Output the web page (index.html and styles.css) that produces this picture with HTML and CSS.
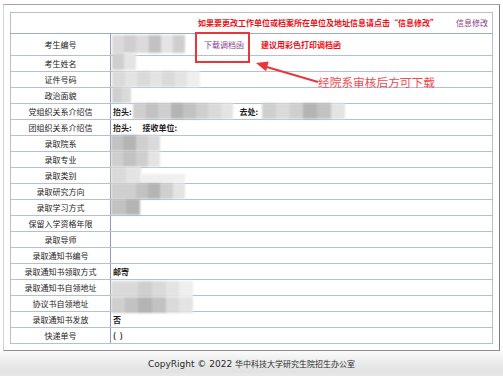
FILE: index.html
```html
<!DOCTYPE html>
<html lang="zh">
<head>
<meta charset="utf-8">
<title>录取信息</title>
<link rel="stylesheet" href="styles.css">
</head>
<body>
<div class="page">
  <div class="frame">
    <table class="info">
      <colgroup><col class="c-label"><col class="c-value"></colgroup>
      <tr class="head">
        <td colspan="2"><span class="warn">如果要更改工作单位或档案所在单位及地址信息请点击“信息修改”</span><a class="link">信息修改</a></td>
      </tr>
      <tr class="first">
        <th>考生编号</th>
        <td><a class="link dl">下载调档函</a><span class="warn">建议用彩色打印调档函</span></td>
      </tr>
      <tr><th>考生姓名</th><td></td></tr>
      <tr><th>证件号码</th><td></td></tr>
      <tr><th>政治面貌</th><td></td></tr>
      <tr><th>党组织关系介绍信</th><td><span class="k">抬头:</span><span class="k k-go">去处:</span></td></tr>
      <tr><th>团组织关系介绍信</th><td><span class="k">抬头:</span><span class="k k-recv">接收单位:</span></td></tr>
      <tr><th>录取院系</th><td></td></tr>
      <tr><th>录取专业</th><td></td></tr>
      <tr><th>录取类别</th><td></td></tr>
      <tr><th>录取研究方向</th><td></td></tr>
      <tr><th>录取学习方式</th><td></td></tr>
      <tr><th>保留入学资格年限</th><td></td></tr>
      <tr><th>录取导师</th><td></td></tr>
      <tr><th>录取通知书编号</th><td></td></tr>
      <tr><th>录取通知书领取方式</th><td><span class="k">邮寄</span></td></tr>
      <tr><th>录取通知书自领地址</th><td></td></tr>
      <tr><th>协议书自领地址</th><td></td></tr>
      <tr><th>录取通知书发放</th><td><span class="k">否</span></td></tr>
      <tr><th>快递单号</th><td><span class="k">(&nbsp;&nbsp;)</span></td></tr>
    </table>
  </div>
  <div class="footer"><span class="latin">CopyRight © 2022 </span><span class="cjk">华中科技大学研究生院招生办公室</span></div>

  <div class="mosaic m1"><i class="g3"></i><i class="g2"></i><i class="g3"></i><i class="g1"></i><i class="g4"></i><i class="g2"></i></div>
  <div class="mosaic m2"><i class="g2"></i><i class="g4"></i></div>
  <div class="mosaic m3"><i class="g3"></i><i class="g4"></i><i class="g3"></i><i class="g4"></i><i class="g3"></i><i class="g4"></i><i class="g5"></i></div>
  <div class="mosaic m4"><i class="g2"></i><i class="g3"></i></div>
  <div class="mosaic m5"><i class="g2"></i><i class="g1"></i><i class="g2"></i><i class="g0"></i><i class="g1"></i><i class="g2"></i><i class="g3"></i><i class="g4"></i></div>
  <div class="mosaic m6"><i class="g2"></i><i class="g3"></i><i class="g2"></i><i class="g0"></i><i class="g1"></i><i class="g4"></i></div>
  <div class="mosaic m7"><i class="g1"></i><i class="g0"></i><i class="g2"></i><i class="g3"></i></div>
  <div class="mosaic m8"><i class="g2"></i><i class="g1"></i><i class="g2"></i><i class="g4"></i></div>
  <div class="mosaic m9"><i class="g3"></i><i class="g4"></i></div>
  <div class="mosaic m10"><i class="g5"></i><i class="g5"></i><i class="g5"></i></div>
  <div class="mosaic m11"><i class="g2"></i><i class="g2"></i><i class="g1"></i><i class="g0"></i><i class="g2"></i><i class="g4"></i></div>
  <div class="mosaic m12"><i class="g1"></i><i class="g0"></i></div>
  <div class="mosaic m13"><i class="g3"></i><i class="g3"></i><i class="g2"></i><i class="g3"></i><i class="g4"></i><i class="g5"></i></div>
  <div class="mosaic m14"><i class="g2"></i><i class="g1"></i><i class="g0"></i><i class="g1"></i><i class="g3"></i><i class="g4"></i></div>

  <div class="callout-box"></div>
  <svg class="arrow" width="503" height="376" viewBox="0 0 503 376">
    <line x1="265" y1="66.5" x2="318" y2="82" stroke="#e8363a" stroke-width="2"/>
    <polygon points="256,63 268.7,61.6 266.1,71.2" fill="#e8363a"/>
  </svg>
  <div class="note">经院系审核后方可下载</div>
</div>
</body>
</html>
```

FILE: styles.css
```css
html, body {
  margin: 0;
  padding: 0;
  background: #ffffff;
}

body {
  font-family: "Noto Sans CJK SC", "Noto Sans", sans-serif;
  color: #222;
}

.page {
  position: relative;
  width: 503px;
  height: 376px;
  overflow: hidden;
}

.frame {
  box-sizing: border-box;
  margin: 4px 0 0 3px;
  width: 497px;
  height: 347px;
  border-top: 1px solid #a4a4a4;
  border-left: 1px solid #d4d4d4;
  border-right: 1px solid #7e7e7e;
  border-bottom: 1px solid #8e8e8e;
  padding: 7px 6px 0 6px;
}

.info {
  border-collapse: collapse;
  width: 483px;
  table-layout: fixed;
  font-size: 8px;
  line-height: 10px;
}

.c-label {
  width: 100px;
}

.info th,
.info td {
  border: 1px solid #b2c0d2;
  padding: 0;
  height: 15px;
  vertical-align: middle;
  white-space: nowrap;
}

.info th {
  font-weight: normal;
  text-align: center;
  color: #1c1c1c;
  border-right-color: #8c9db5;
}

.info td {
  padding-left: 2px;
}

.info tr.head td {
  height: 20px;
  text-align: right;
  padding-right: 4px;
  border-bottom-color: #9aabc2;
}

.info tr.first th,
.info tr.first td {
  height: 21px;
}

.warn {
  color: #e8141c;
  font-weight: bold;
}

.head .warn {
  margin-right: 18px;
}

.link {
  color: #8a3c8c;
}

.dl {
  margin-left: 91px;
  margin-right: 17px;
}

.k {
  color: #1c1c1c;
  font-weight: bold;
}

.k-go {
  margin-left: 108px;
}

.k-recv {
  margin-left: 11px;
}

.footer {
  height: 25px;
  background: linear-gradient(#fbfbfb, #ececec 45%, #e2e2e2 80%, #e8e8e8);
  display: flex;
  align-items: center;
  justify-content: center;
  color: #2a2a2a;
}

.footer .latin {
  font-family: "DejaVu Sans", sans-serif;
  font-size: 9px;
  white-space: pre;
}

.footer .cjk {
  font-size: 8px;
}

/* pixelated privacy mosaics laid over the table */
.mosaic {
  position: absolute;
  display: flex;
  filter: blur(0.8px);
}

.mosaic i {
  flex: 1;
  display: block;
}

.g0 { background: #b4b4b4; }
.g1 { background: #c2c2c2; }
.g2 { background: #cfcfcf; }
.g3 { background: #dadada; }
.g4 { background: #e4e4e4; }
.g5 { background: #efefef; }

.m1  { left: 112px; top: 35px;  width: 73px; height: 18px; }
.m2  { left: 112px; top: 53px;  width: 24px; height: 17px; }
.m3  { left: 112px; top: 71px;  width: 88px; height: 16px; }
.m4  { left: 112px; top: 87px;  width: 19px; height: 16px; }
.m5  { left: 133px; top: 103px; width: 100px; height: 16px; }
.m6  { left: 262px; top: 103px; width: 83px; height: 16px; border-radius: 6px; }
.m7  { left: 111px; top: 135px; width: 49px; height: 16px; }
.m8  { left: 111px; top: 151px; width: 49px; height: 16px; }
.m9  { left: 111px; top: 167px; width: 30px; height: 16px; }
.m10 { left: 141px; top: 174px; width: 44px; height: 8px; }
.m11 { left: 111px; top: 183px; width: 74px; height: 16px; }
.m12 { left: 111px; top: 199px; width: 29px; height: 16px; }
.m13 { left: 111px; top: 281px; width: 82px; height: 16px; border-radius: 0 6px 6px 0; }
.m14 { left: 111px; top: 297px; width: 82px; height: 16px; border-radius: 0 6px 6px 0; }

.callout-box {
  position: absolute;
  left: 195px;
  top: 32px;
  width: 51px;
  height: 27px;
  border: 2px solid #e8363a;
}

.arrow {
  position: absolute;
  left: 0;
  top: 0;
}

.note {
  position: absolute;
  left: 318px;
  top: 74px;
  font-size: 11.7px;
  line-height: 16px;
  color: #f04a50;
  white-space: nowrap;
}
```
